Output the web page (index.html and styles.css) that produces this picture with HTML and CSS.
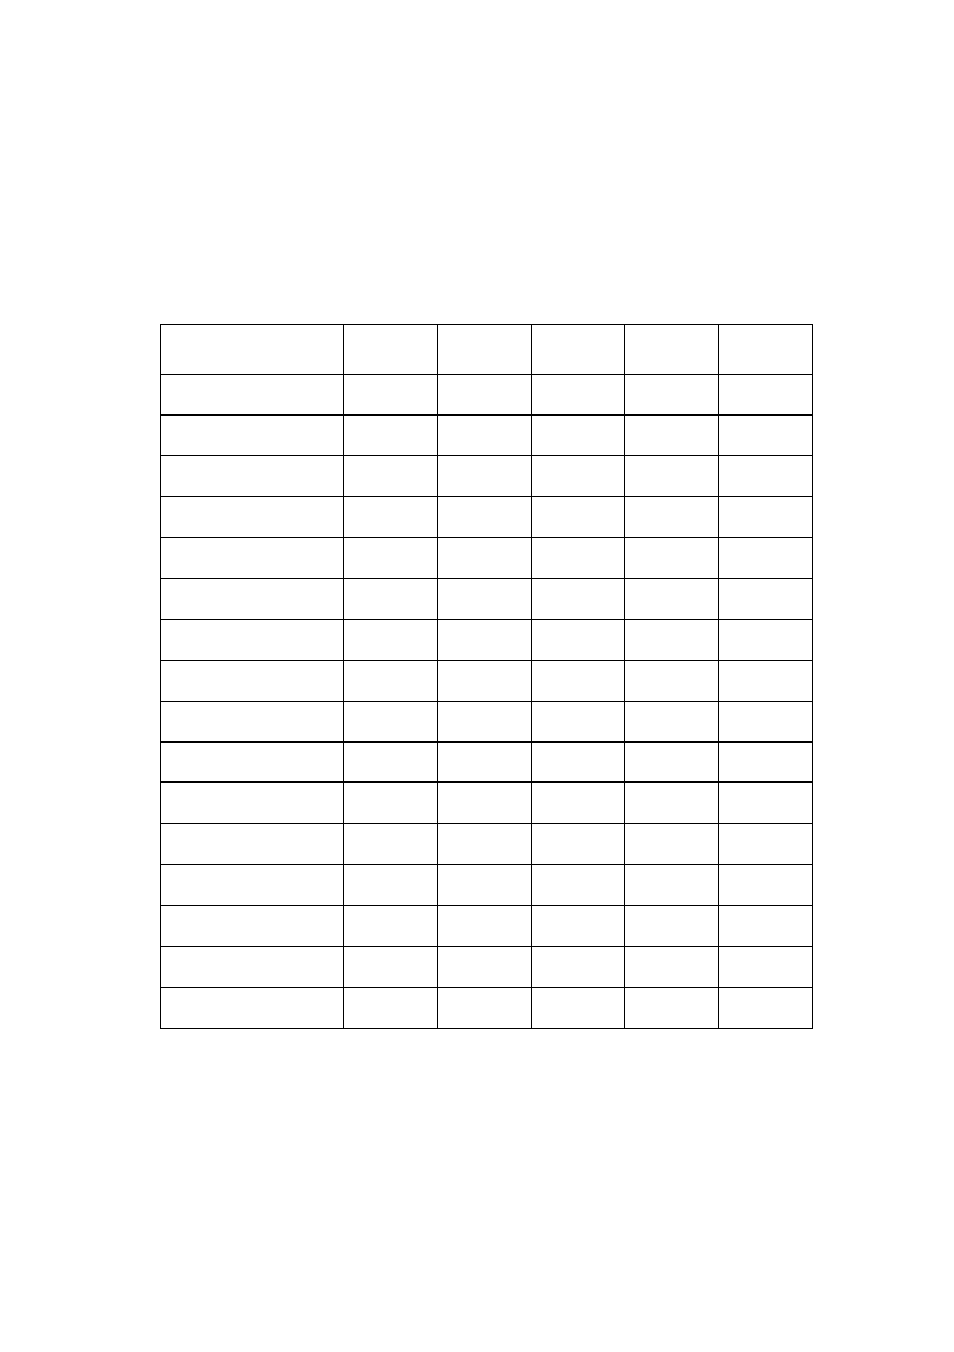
FILE: index.html
```html
<!DOCTYPE html>
<html>
<head>
<meta charset="utf-8">
<link rel="stylesheet" href="styles.css">
</head>
<body>
<div class="page">
<table class="grid">
<colgroup>
<col class="c-first"><col class="c-a"><col class="c-a"><col class="c-b"><col class="c-a"><col class="c-a">
</colgroup>
<tbody>
<tr class="r-head"><td></td><td></td><td></td><td></td><td></td><td></td></tr>
<tr class="r-sub thick-bottom"><td></td><td></td><td></td><td></td><td></td><td></td></tr>
<tr class="r after-thick"><td></td><td></td><td></td><td></td><td></td><td></td></tr>
<tr class="r"><td></td><td></td><td></td><td></td><td></td><td></td></tr>
<tr class="r"><td></td><td></td><td></td><td></td><td></td><td></td></tr>
<tr class="r"><td></td><td></td><td></td><td></td><td></td><td></td></tr>
<tr class="r"><td></td><td></td><td></td><td></td><td></td><td></td></tr>
<tr class="r"><td></td><td></td><td></td><td></td><td></td><td></td></tr>
<tr class="r"><td></td><td></td><td></td><td></td><td></td><td></td></tr>
<tr class="r thick-bottom before-thick"><td></td><td></td><td></td><td></td><td></td><td></td></tr>
<tr class="r-mid thick-bottom"><td></td><td></td><td></td><td></td><td></td><td></td></tr>
<tr class="r"><td></td><td></td><td></td><td></td><td></td><td></td></tr>
<tr class="r"><td></td><td></td><td></td><td></td><td></td><td></td></tr>
<tr class="r"><td></td><td></td><td></td><td></td><td></td><td></td></tr>
<tr class="r"><td></td><td></td><td></td><td></td><td></td><td></td></tr>
<tr class="r"><td></td><td></td><td></td><td></td><td></td><td></td></tr>
<tr class="r"><td></td><td></td><td></td><td></td><td></td><td></td></tr>
</tbody>
</table>
</div>
</body>
</html>
```
FILE: styles.css
```css
html, body {
  margin: 0;
  padding: 0;
  background: #ffffff;
  font-family: "Liberation Sans", Arial, sans-serif;
}
.page {
  padding-top: 324px;
  padding-left: 160px;
}
.grid {
  border-collapse: collapse;
  table-layout: fixed;
  width: 653px;
}
.grid td {
  border: 1px solid #000;
  padding: 0;
}
.c-first { width: 183px; }
.c-a { width: 94px; }
.c-b { width: 93px; }
.r-head td { height: 49px; }
.r-sub td { height: 39px; }
.r td { height: 40px; }
.r.after-thick td { height: 39px; }
.r.before-thick td { height: 39px; }
.r-mid td { height: 38px; }
.thick-bottom td { border-bottom-width: 2px; }
```
